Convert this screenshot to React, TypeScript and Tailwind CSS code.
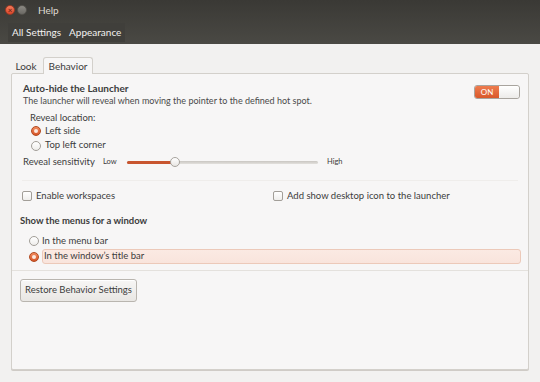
import React from "react";

const font = { fontFamily: "Lato, 'Noto Sans', sans-serif" };

function Radio({ checked }: { checked?: boolean }) {
  if (checked) {
    return (
      <span className="flex h-[10px] w-[10px] shrink-0 items-center justify-center rounded-full border border-[#b2491f] bg-gradient-to-b from-[#f08a5d] to-[#d65527]">
        <span className="h-[4px] w-[4px] rounded-full bg-[#fbe9e0]" />
      </span>
    );
  }
  return <span className="h-[10px] w-[10px] shrink-0 rounded-full border border-[#a29e98] bg-gradient-to-b from-white to-[#eeedeb]" />;
}

function Checkbox() {
  return <span className="h-[10px] w-[10px] shrink-0 rounded-[2px] border border-[#a29e98] bg-gradient-to-b from-white to-[#efeeec]" />;
}

export default function App() {
  return (
    <div className="flex h-[382px] w-[540px] flex-col overflow-hidden bg-[#f2f1f0] text-[#3c3c3c]" style={font}>
      {/* header */}
      <div className="flex h-[44px] flex-col bg-gradient-to-b from-[#3a3935] to-[#4a4944]">
        <div className="flex h-[20px] items-center pl-[5px]">
          <span className="flex h-[10px] w-[10px] items-center justify-center rounded-full border border-[#9e3b24] bg-gradient-to-b from-[#f47a5a] to-[#d9452b] text-[8px] leading-none text-[#5a1a0c]">
            ×
          </span>
          <span className="ml-[2px] h-[10px] w-[10px] rounded-full border border-[#55534e] bg-gradient-to-b from-[#8b8983] to-[#6c6a65]" />
          <span className="ml-[11px] text-[10px] text-[#dfdbd2]">Help</span>
        </div>
        <div className="flex h-[24px] items-center pl-[8px]">
          <div className="flex h-[19px] items-center gap-[8px] bg-[#403f3b] px-[4px] text-[10px] text-[#f2f1f0]">
            <span>All Settings</span>
            <span>Appearance</span>
          </div>
        </div>
      </div>

      {/* body */}
      <div className="flex flex-1 flex-col px-[11px] pb-[12px] pt-[13px]">
        <div className="flex h-[16px] items-end text-[10px]">
          <div className="flex h-[14px] w-[30px] items-center justify-center rounded-t-[2px] text-[#3c3c3c]">Look</div>
          <div className="relative z-10 -mb-px ml-[2px] flex h-[17px] w-[50px] items-center justify-center rounded-t-[3px] border border-b-0 border-[#d3d0cb] bg-[#f7f6f6]">
            Behavior
          </div>
        </div>
        <div className="flex flex-1 flex-col rounded-[2px] border border-[#d3d0cb] bg-[#f7f6f6] shadow-[0_1px_0_#cfcbc6]">
          {/* auto hide */}
          <div className="flex items-start justify-between pl-[11px] pr-[8px] pt-[8px]">
            <div className="flex flex-col">
              <span className="h-[13px] text-[10px] font-bold leading-[13px] text-[#3c3c3c]">Auto-hide the Launcher</span>
              <span className="h-[11px] text-[9px] leading-[11px] text-[#4a4a4a]">
                The launcher will reveal when moving the pointer to the defined hot spot.
              </span>
            </div>
            <div className="mt-[3px] flex h-[14px] w-[46px] overflow-hidden rounded-[3px] border border-[#a8a49e]">
              <span className="flex w-[24px] items-center justify-center bg-gradient-to-b from-[#ee7c4e] to-[#d9582a] text-[8px] text-white">ON</span>
              <span className="flex-1 rounded-[2px] bg-gradient-to-b from-white to-[#ecebe9]" />
            </div>
          </div>
          <div className="mt-[6px] flex h-[12px] items-center pl-[18px] text-[9.5px]">Reveal location:</div>
          <div className="flex h-[14px] items-center gap-[4px] pl-[19px] text-[9.5px]">
            <Radio checked />
            <span>Left side</span>
          </div>
          <div className="flex h-[15px] items-center gap-[4px] pl-[19px] text-[9.5px]">
            <Radio />
            <span>Top left corner</span>
          </div>
          <div className="flex h-[18px] items-center pl-[11px] text-[9.5px]">
            <span className="w-[80px]">Reveal sensitivity</span>
            <span className="w-[24px] text-[7.5px]">Low</span>
            <div className="relative flex h-[10px] w-[191px] items-center">
              <div className="h-[3px] w-full rounded-full bg-gradient-to-b from-[#c9c6c1] to-[#e2e0dd]" />
              <div className="absolute left-0 top-[3.5px] h-[3px] w-[48px] rounded-full bg-[#c8552f]" />
              <div className="absolute left-[43px] top-[0px] h-[10px] w-[10px] rounded-full border border-[#a8a49e] bg-gradient-to-b from-white to-[#e8e6e3]" />
            </div>
            <span className="ml-[9px] text-[7.5px]">High</span>
          </div>
          <div className="mx-[10px] mt-[9px] h-px bg-[#efedeb]" />
          <div className="mt-[8px] flex h-[14px] items-center text-[9.5px]">
            <div className="flex w-[261px] items-center gap-[4px] pl-[10px]">
              <Checkbox />
              <span>Enable workspaces</span>
            </div>
            <div className="flex items-center gap-[4px]">
              <Checkbox />
              <span>Add show desktop icon to the launcher</span>
            </div>
          </div>
          <div className="mt-[12px] flex h-[12px] items-center pl-[8px] text-[9.5px] font-bold">Show the menus for a window</div>
          <div className="mt-[7px] flex h-[14px] items-center gap-[3px] pl-[17px] text-[9.5px]">
            <Radio />
            <span>In the menu bar</span>
          </div>
          <div className="mt-[1px] flex h-[15px] items-center gap-[3px] pl-[17px] pr-[7px] text-[9.5px]">
            <Radio checked />
            <span className="flex h-[15px] flex-1 items-center rounded-[3px] border border-[#ecc9b9] bg-gradient-to-b from-[#fbeae3] to-[#f9e4dc] pl-[1px]">
              In the window’s title bar
            </span>
          </div>
          <div className="mt-[6px] h-px bg-[#e4e1dd]" />
          <div className="mt-[8px] pl-[8px]">
            <button className="flex h-[23px] w-[117px] items-center justify-center rounded-[3px] border border-[#b9b5af] bg-gradient-to-b from-[#f7f6f5] to-[#e9e7e4] text-[9.5px] text-[#3c3c3c] shadow-[0_1px_0_#ffffff_inset]">
              Restore Behavior Settings
            </button>
          </div>
        </div>
      </div>
    </div>
  );
}
